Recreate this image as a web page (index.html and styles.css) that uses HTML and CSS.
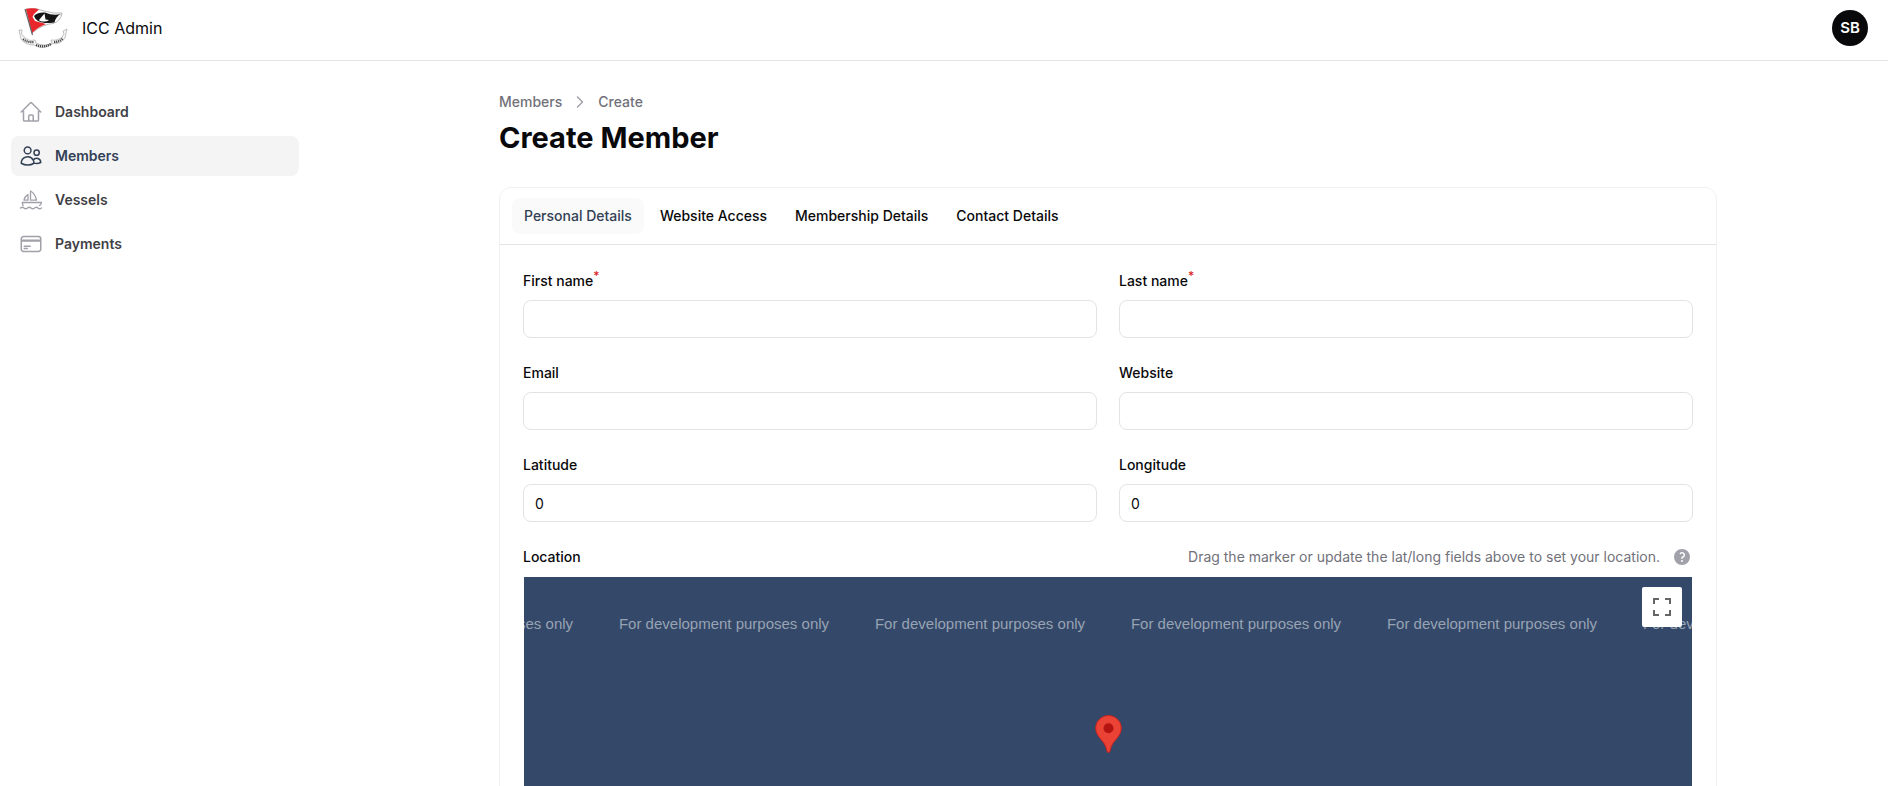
FILE: index.html
```html
<!DOCTYPE html>
<html lang="en">
<head>
<meta charset="utf-8">
<title>Create Member - ICC Admin</title>
<link rel="stylesheet" href="styles.css">
</head>
<body>
<header class="topbar">
  <a class="brand" href="#">
    <svg class="brand-logo" viewBox="0 0 50 40" aria-hidden="true">
      <path d="M8 1 Q18 -1 26 3 Q36 6 44 5 Q43 13 35 15.500 Q25 16 14 25 Z" fill="#fff" stroke="#888" stroke-width=".6"/>
      <path d="M8 1 Q15 -.5 21 1.500 L16 6 L14.500 9 L17 13 L28 16 Q20 19 14 25 Z" fill="#e8262c"/>
      <path d="M16 8 Q19 4 27 4.500 Q35 8 43 6 Q38 8 36.500 14.500 Q32 15 27 15 Q18 14 16 8 Z" fill="#151515"/>
      <path d="M26.500 5.500 L27.500 11.500 L31 12 Q28 14.500 22 13 L21 12 Z" fill="#fff"/>
      <path d="M7 1 L14.500 27" stroke="#666" stroke-width="1.200" fill="none"/>
      <path d="M1 22 L4 22 L3.500 26 L7 30 Q12 34 17 32 L18 35 Q26 39 34 35 L33 32 Q40 33 44 29 L46 26 L45 23 L49 21 L47 30 Q42 37 35 35.500 Q25 43 16 37 Q7 37 3 31 Z" fill="#f6f6f6" stroke="#999" stroke-width=".6"/>
      <path d="M5 31 Q10 35 16 34 M18 37 Q26 40 33 36 M36 34 Q42 34 45 30" fill="none" stroke="#444" stroke-width="2.200" stroke-dasharray="1.200 .8"/>
    </svg>
    <span>ICC Admin</span>
  </a>
  <button class="avatar" type="button" aria-label="User menu">SB</button>
</header>
<div class="layout">
  <nav class="sidebar" aria-label="Main">
    <a class="nav-item" href="#">
      <svg class="icon" viewBox="0 0 24 24" aria-hidden="true"><path d="m2.25 12 8.954-8.955c.44-.439 1.152-.439 1.591 0L21.75 12M4.5 9.75v10.125c0 .621.504 1.125 1.125 1.125H9.75v-4.875c0-.621.504-1.125 1.125-1.125h2.25c.621 0 1.125.504 1.125 1.125V21h4.125c.621 0 1.125-.504 1.125-1.125V9.75M8.25 21h8.25"/></svg>
      Dashboard
    </a>
    <a class="nav-item nav-item-active" href="#" aria-current="page">
      <svg class="icon" viewBox="0 0 24 24" aria-hidden="true"><path d="M15 19.128a9.38 9.38 0 0 0 2.625.372 9.337 9.337 0 0 0 4.121-.952 4.125 4.125 0 0 0-7.533-2.493M15 19.128v-.003c0-1.113-.285-2.16-.786-3.07M15 19.128v.106A12.318 12.318 0 0 1 8.624 21c-2.331 0-4.512-.645-6.374-1.766l-.001-.109a6.375 6.375 0 0 1 11.964-3.07M12 6.375a3.375 3.375 0 1 1-6.75 0 3.375 3.375 0 0 1 6.75 0Zm8.25 2.25a2.625 2.625 0 1 1-5.25 0 2.625 2.625 0 0 1 5.25 0Z"/></svg>
      Members
    </a>
    <a class="nav-item" href="#">
      <svg class="icon icon-thin" viewBox="0 0 24 24" aria-hidden="true"><path d="M4 17.500l-.8-3H22.500q-.5 2.500-2 3M11.500 3v9.200h6Q16.500 6 11.500 3ZM9 6.500v5.700H5Q5.500 8.500 9 6.500ZM1.500 20q2-1.500 3.500 0t3.500 0t3.500 0t3.500 0t3.500 0t3.500 0"/></svg>
      Vessels
    </a>
    <a class="nav-item" href="#">
      <svg class="icon" viewBox="0 0 24 24" aria-hidden="true"><path d="M2.250 8.250h19.500M2.250 9h19.500m-16.500 5.250h6m-6 2.250h3m-3.750 3h15a2.250 2.250 0 0 0 2.250-2.250V6.750A2.250 2.250 0 0 0 19.500 4.500h-15a2.250 2.250 0 0 0-2.250 2.250v10.500A2.250 2.250 0 0 0 4.500 19.500Z"/></svg>
      Payments
    </a>
  </nav>
  <main class="main">
    <div class="page">
      <nav class="breadcrumb" aria-label="Breadcrumb">
        <a href="#">Members</a>
        <svg class="chevron" viewBox="0 0 20 20" aria-hidden="true"><path d="M7.500 5l5 5-5 5"/></svg>
        <a href="#">Create</a>
      </nav>
      <h1 class="title">Create Member</h1>
      <form class="card">
        <div class="tabs" role="tablist">
          <button class="tab tab-active" type="button" role="tab" aria-selected="true">Personal Details</button>
          <button class="tab" type="button" role="tab" aria-selected="false">Website Access</button>
          <button class="tab" type="button" role="tab" aria-selected="false">Membership Details</button>
          <button class="tab" type="button" role="tab" aria-selected="false">Contact Details</button>
        </div>
        <div class="fields">
          <div class="field">
            <label class="label" for="first">First name<sup class="required">*</sup></label>
            <input class="input" id="first" type="text" required>
          </div>
          <div class="field">
            <label class="label" for="last">Last name<sup class="required">*</sup></label>
            <input class="input" id="last" type="text" required>
          </div>
          <div class="field">
            <label class="label" for="email">Email</label>
            <input class="input" id="email" type="email">
          </div>
          <div class="field">
            <label class="label" for="website">Website</label>
            <input class="input" id="website" type="url">
          </div>
          <div class="field">
            <label class="label" for="lat">Latitude</label>
            <input class="input" id="lat" type="text" inputmode="decimal" value="0">
          </div>
          <div class="field">
            <label class="label" for="lng">Longitude</label>
            <input class="input" id="lng" type="text" inputmode="decimal" value="0">
          </div>
          <div class="field field-wide">
            <div class="location-head">
              <span class="label" id="location">Location</span>
              <span class="hint">Drag the marker or update the lat/long fields above to set your location.
                <svg class="help" viewBox="0 0 20 20" aria-hidden="true"><path fill-rule="evenodd" clip-rule="evenodd" d="M18 10a8 8 0 1 1-16 0 8 8 0 0 1 16 0ZM8.940 6.940a.75.75 0 1 1-1.061-1.061 3 3 0 1 1 2.871 5.026v.345a.75.75 0 0 1-1.500 0v-.5c0-.72.57-1.172 1.081-1.287A1.500 1.500 0 1 0 8.940 6.940ZM10 15a1 1 0 1 0 0-2 1 1 0 0 0 0 2Z"/></svg>
              </span>
            </div>
            <div class="map" role="group" aria-labelledby="location">
              <div class="tiles">
                <span class="tile">For development purposes only</span>
                <span class="tile">For development purposes only</span>
                <span class="tile">For development purposes only</span>
                <span class="tile">For development purposes only</span>
                <span class="tile">For development purposes only</span>
                <span class="tile">For development purposes only</span>
              </div>
              <svg class="pin" viewBox="0 0 27 38" aria-hidden="true"><path d="M13.500 .5C6.500 .5 .7 6.100 .7 13.200c0 4.200 2 7.200 4.500 10.300 3.200 4 5.300 5.900 6.500 11.500.5 2.300 1 2.500 1.800 2.500s1.300-.2 1.800-2.500c1.200-5.600 3.300-7.500 6.500-11.500 2.500-3.100 4.500-6.100 4.500-10.300C26.300 6.100 20.500 .5 13.500 .5Z" fill="#ea4335" stroke="#c5221f"/><circle cx="13.500" cy="13.300" r="5" fill="#b31412"/></svg>
              <button class="fullscreen" type="button" aria-label="Toggle fullscreen view"><svg viewBox="0 0 18 18" aria-hidden="true"><path d="M0 0v6h2V2h4V0H0Zm16 0h-4v2h4v4h2V0h-2Zm0 16h-4v2h6v-6h-2v4ZM2 12H0v6h6v-2H2v-4Z"/></svg></button>
            </div>
          </div>
        </div>
      </form>
    </div>
  </main>
</div>
</body>
</html>
```
FILE: styles.css
```css
* {
  box-sizing: border-box;
}

body {
  margin: 0;
  background: #fff;
  color: #09090b;
  font: 14px/24px Inter, sans-serif;
}

a {
  color: inherit;
  text-decoration: none;
}

button {
  border: 0;
  font: inherit;
  cursor: pointer;
}

.topbar {
  display: flex;
  align-items: center;
  justify-content: space-between;
  padding: 8px 20px 12px 18px;
  border-bottom: 1px solid #e4e4e7;
}

.brand {
  display: flex;
  align-items: center;
  gap: 14px;
  font-size: 16px;
}

.brand-logo {
  width: 50px;
  height: 40px;
}

.avatar {
  width: 36px;
  height: 36px;
  padding: 0;
  border-radius: 50%;
  background: #09090b;
  color: #fff;
  font-size: 15px;
  font-weight: 600;
}

.layout {
  display: flex;
  height: calc(100vh - 61px);
  overflow: hidden;
}

.sidebar {
  display: flex;
  flex-direction: column;
  gap: 4px;
  flex: 0 0 328px;
  padding: 31px 29px 0 11px;
}

.nav-item {
  display: flex;
  align-items: center;
  gap: 12px;
  padding: 8px;
  border-radius: 8px;
  color: #3f3f46;
  font-weight: 600;
}

.icon {
  width: 24px;
  height: 24px;
  fill: none;
  stroke: #a1a1aa;
  stroke-width: 1.5;
  stroke-linecap: round;
  stroke-linejoin: round;
}

.icon-thin {
  stroke-width: 1.3;
}

.nav-item-active {
  background: #f4f4f5;
  color: #334155;
}

.nav-item-active .icon {
  stroke: #334155;
}

.main {
  flex: 1;
  min-width: 0;
  padding: 29px 32px 0;
}

.page {
  max-width: 1218px;
  margin: 0 auto;
}

.breadcrumb {
  display: flex;
  align-items: center;
  gap: 8px;
  color: #71717a;
  font-weight: 500;
}

.chevron {
  width: 20px;
  height: 20px;
  fill: none;
  stroke: #a1a1aa;
  stroke-width: 1.5;
  stroke-linecap: round;
  stroke-linejoin: round;
}

.title {
  margin: 6px 0 31px;
  font-size: 29px;
  line-height: 36px;
  font-weight: 700;
}

.card {
  border: 1px solid #f1f1f2;
  border-radius: 12px;
}

.tabs {
  display: flex;
  gap: 4px;
  padding: 10px 12px;
  border-bottom: 1px solid #e4e4e7;
}

.tab {
  padding: 6px 12px;
  border-radius: 8px;
  background: none;
  color: #09090b;
  font-weight: 500;
}

.tab-active {
  background: #fafafa;
  color: #334155;
}

.fields {
  display: grid;
  grid-template-columns: 1fr 1fr;
  gap: 23px 22px;
  padding: 24px 23px;
}

.field {
  display: flex;
  flex-direction: column;
  gap: 7px;
  min-width: 0;
}

.field-wide {
  grid-column: 1 / -1;
  gap: 8px;
}

.label {
  font-weight: 500;
}

.required {
  color: #dc2626;
  font-size: 12px;
  line-height: 0;
}

.input {
  width: 100%;
  height: 38px;
  padding: 0 11px;
  border: 1px solid #e3e3e5;
  border-radius: 8px;
  background: #fff;
  color: #09090b;
  font: inherit;
}

.location-head {
  display: flex;
  justify-content: space-between;
}

.hint {
  display: flex;
  align-items: center;
  gap: 12px;
  padding-right: 1px;
  color: #71717a;
}

.help {
  width: 20px;
  height: 20px;
  fill: #a1a1aa;
}

.map {
  position: relative;
  height: 400px;
  margin: 0 1px;
  overflow: hidden;
  background: #344869;
}

.tiles {
  display: flex;
  justify-content: center;
  padding-top: 35px;
  color: #98a3b3;
  font-family: "Liberation Sans", Arial, sans-serif;
  font-size: 15px;
}

.tile {
  flex: 0 0 256px;
  text-align: center;
}

.pin {
  position: absolute;
  top: 138px;
  left: calc(50% - 13px);
  width: 27px;
  height: 38px;
}

.fullscreen {
  position: absolute;
  top: 10px;
  right: 10px;
  display: grid;
  place-items: center;
  width: 40px;
  height: 40px;
  padding: 0;
  border-radius: 2px;
  background: #fff;
}

.fullscreen svg {
  width: 18px;
  height: 18px;
  fill: #666;
}
```
